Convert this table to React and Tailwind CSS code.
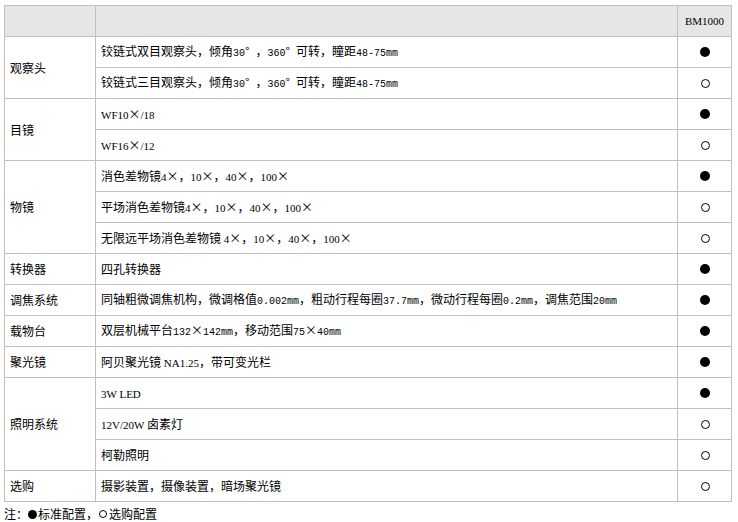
import React from "react";

const FILL = "f";
const OPEN = "o";

function Txt({ text, serif }) {
  const parts = text.split(/([\x20-\x7E]+)/).filter((p) => p !== "");
  return (
    <span className="whitespace-pre">
      {parts.map((p, i) =>
        /^[\x20-\x7E]+$/.test(p) ? (
          serif ? (
            <span key={i} className="font-['Liberation_Serif'] text-[11px] text-black">
              {p}
            </span>
          ) : (
            <span key={i} className="font-['Liberation_Mono'] text-[10px] text-black">
              {p}
            </span>
          )
        ) : (
          <span key={i}>{p}</span>
        )
      )}
    </span>
  );
}

function Mark({ type }) {
  return type === FILL ? (
    <span className="inline-block w-[10px] h-[10px] rounded-full bg-black" />
  ) : (
    <span className="inline-block w-[9px] h-[9px] rounded-full border border-black" />
  );
}

const groups = [
  {
    name: "观察头",
    rows: [
      { t: "铰链式双目观察头，倾角30° ，360° 可转，瞳距48-75mm", m: FILL },
      { t: "铰链式三目观察头，倾角30° ，360° 可转，瞳距48-75mm", m: OPEN },
    ],
  },
  {
    name: "目镜",
    rows: [
      { t: "WF10×/18", m: FILL, s: true },
      { t: "WF16×/12", m: OPEN, s: true },
    ],
  },
  {
    name: "物镜",
    rows: [
      { t: "消色差物镜4×，10×，40×，100×", m: FILL, s: true },
      { t: "平场消色差物镜4×，10×，40×，100×", m: OPEN, s: true },
      { t: "无限远平场消色差物镜 4×，10×，40×，100×", m: OPEN, s: true },
    ],
  },
  { name: "转换器", rows: [{ t: "四孔转换器", m: FILL }] },
  {
    name: "调焦系统",
    rows: [
      {
        t: "同轴粗微调焦机构，微调格值0.002mm，粗动行程每圈37.7mm，微动行程每圈0.2mm，调焦范围20mm",
        m: FILL,
      },
    ],
  },
  {
    name: "载物台",
    rows: [{ t: "双层机械平台132×142mm，移动范围75×40mm", m: FILL }],
  },
  {
    name: "聚光镜",
    rows: [{ t: "阿贝聚光镜 NA1.25，带可变光栏", m: FILL, s: true }],
  },
  {
    name: "照明系统",
    rows: [
      { t: "3W LED", m: FILL, s: true },
      { t: "12V/20W 卤素灯", m: OPEN, s: true },
      { t: "柯勒照明", m: OPEN },
    ],
  },
  { name: "选购", rows: [{ t: "摄影装置，摄像装置，暗场聚光镜", m: OPEN }] },
];

export default function App() {
  const cells = [];
  let row = 2;
  groups.forEach((g, gi) => {
    const n = g.rows.length;
    cells.push(
      <div
        key={`g${gi}`}
        className="border-r border-b border-[#c0c0c0] flex items-center pl-[5px]"
        style={{ gridColumn: "1", gridRow: `${row} / span ${n}` }}
      >
        {g.name}
      </div>
    );
    g.rows.forEach((r, ri) => {
      cells.push(
        <div
          key={`t${gi}-${ri}`}
          className="border-r border-b border-[#c0c0c0] flex items-center pl-[5px]"
          style={{ gridColumn: "2", gridRow: `${row + ri}` }}
        >
          <Txt text={r.t} serif={r.s} />
        </div>
      );
      cells.push(
        <div
          key={`m${gi}-${ri}`}
          className="border-r border-b border-[#c0c0c0] flex items-center justify-center pl-[1px]"
          style={{ gridColumn: "3", gridRow: `${row + ri}` }}
        >
          <Mark type={r.m} />
        </div>
      );
    });
    row += n;
  });

  return (
    <div className="w-[738px] h-[522px] bg-white text-black pt-[5px] pl-[4px] text-[12px] leading-[14px] font-['Noto_Sans_CJK_SC',sans-serif] overflow-hidden">
      <div className="w-[728px] grid grid-cols-[91px_582px_54px] auto-rows-[31px] border-t border-l border-[#c0c0c0]">
        <div className="bg-[#e6e6e6] border-r border-b border-[#c0c0c0]" />
        <div className="bg-[#e6e6e6] border-r border-b border-[#c0c0c0]" />
        <div className="bg-[#e6e6e6] border-r border-b border-[#c0c0c0] flex items-center justify-center">
          <span className="font-['Liberation_Serif'] text-[11px]">BM1000</span>
        </div>
        {cells}
      </div>
      <div className="pt-[5px] flex items-center">
        <span>注：</span>
        <span className="inline-block w-[9px] h-[9px] rounded-full bg-black mr-[1px]" />
        <span>标准配置，</span>
        <span className="inline-block w-[8px] h-[8px] rounded-full border border-black mr-[2px] ml-[1px]" />
        <span>选购配置</span>
      </div>
    </div>
  );
}
